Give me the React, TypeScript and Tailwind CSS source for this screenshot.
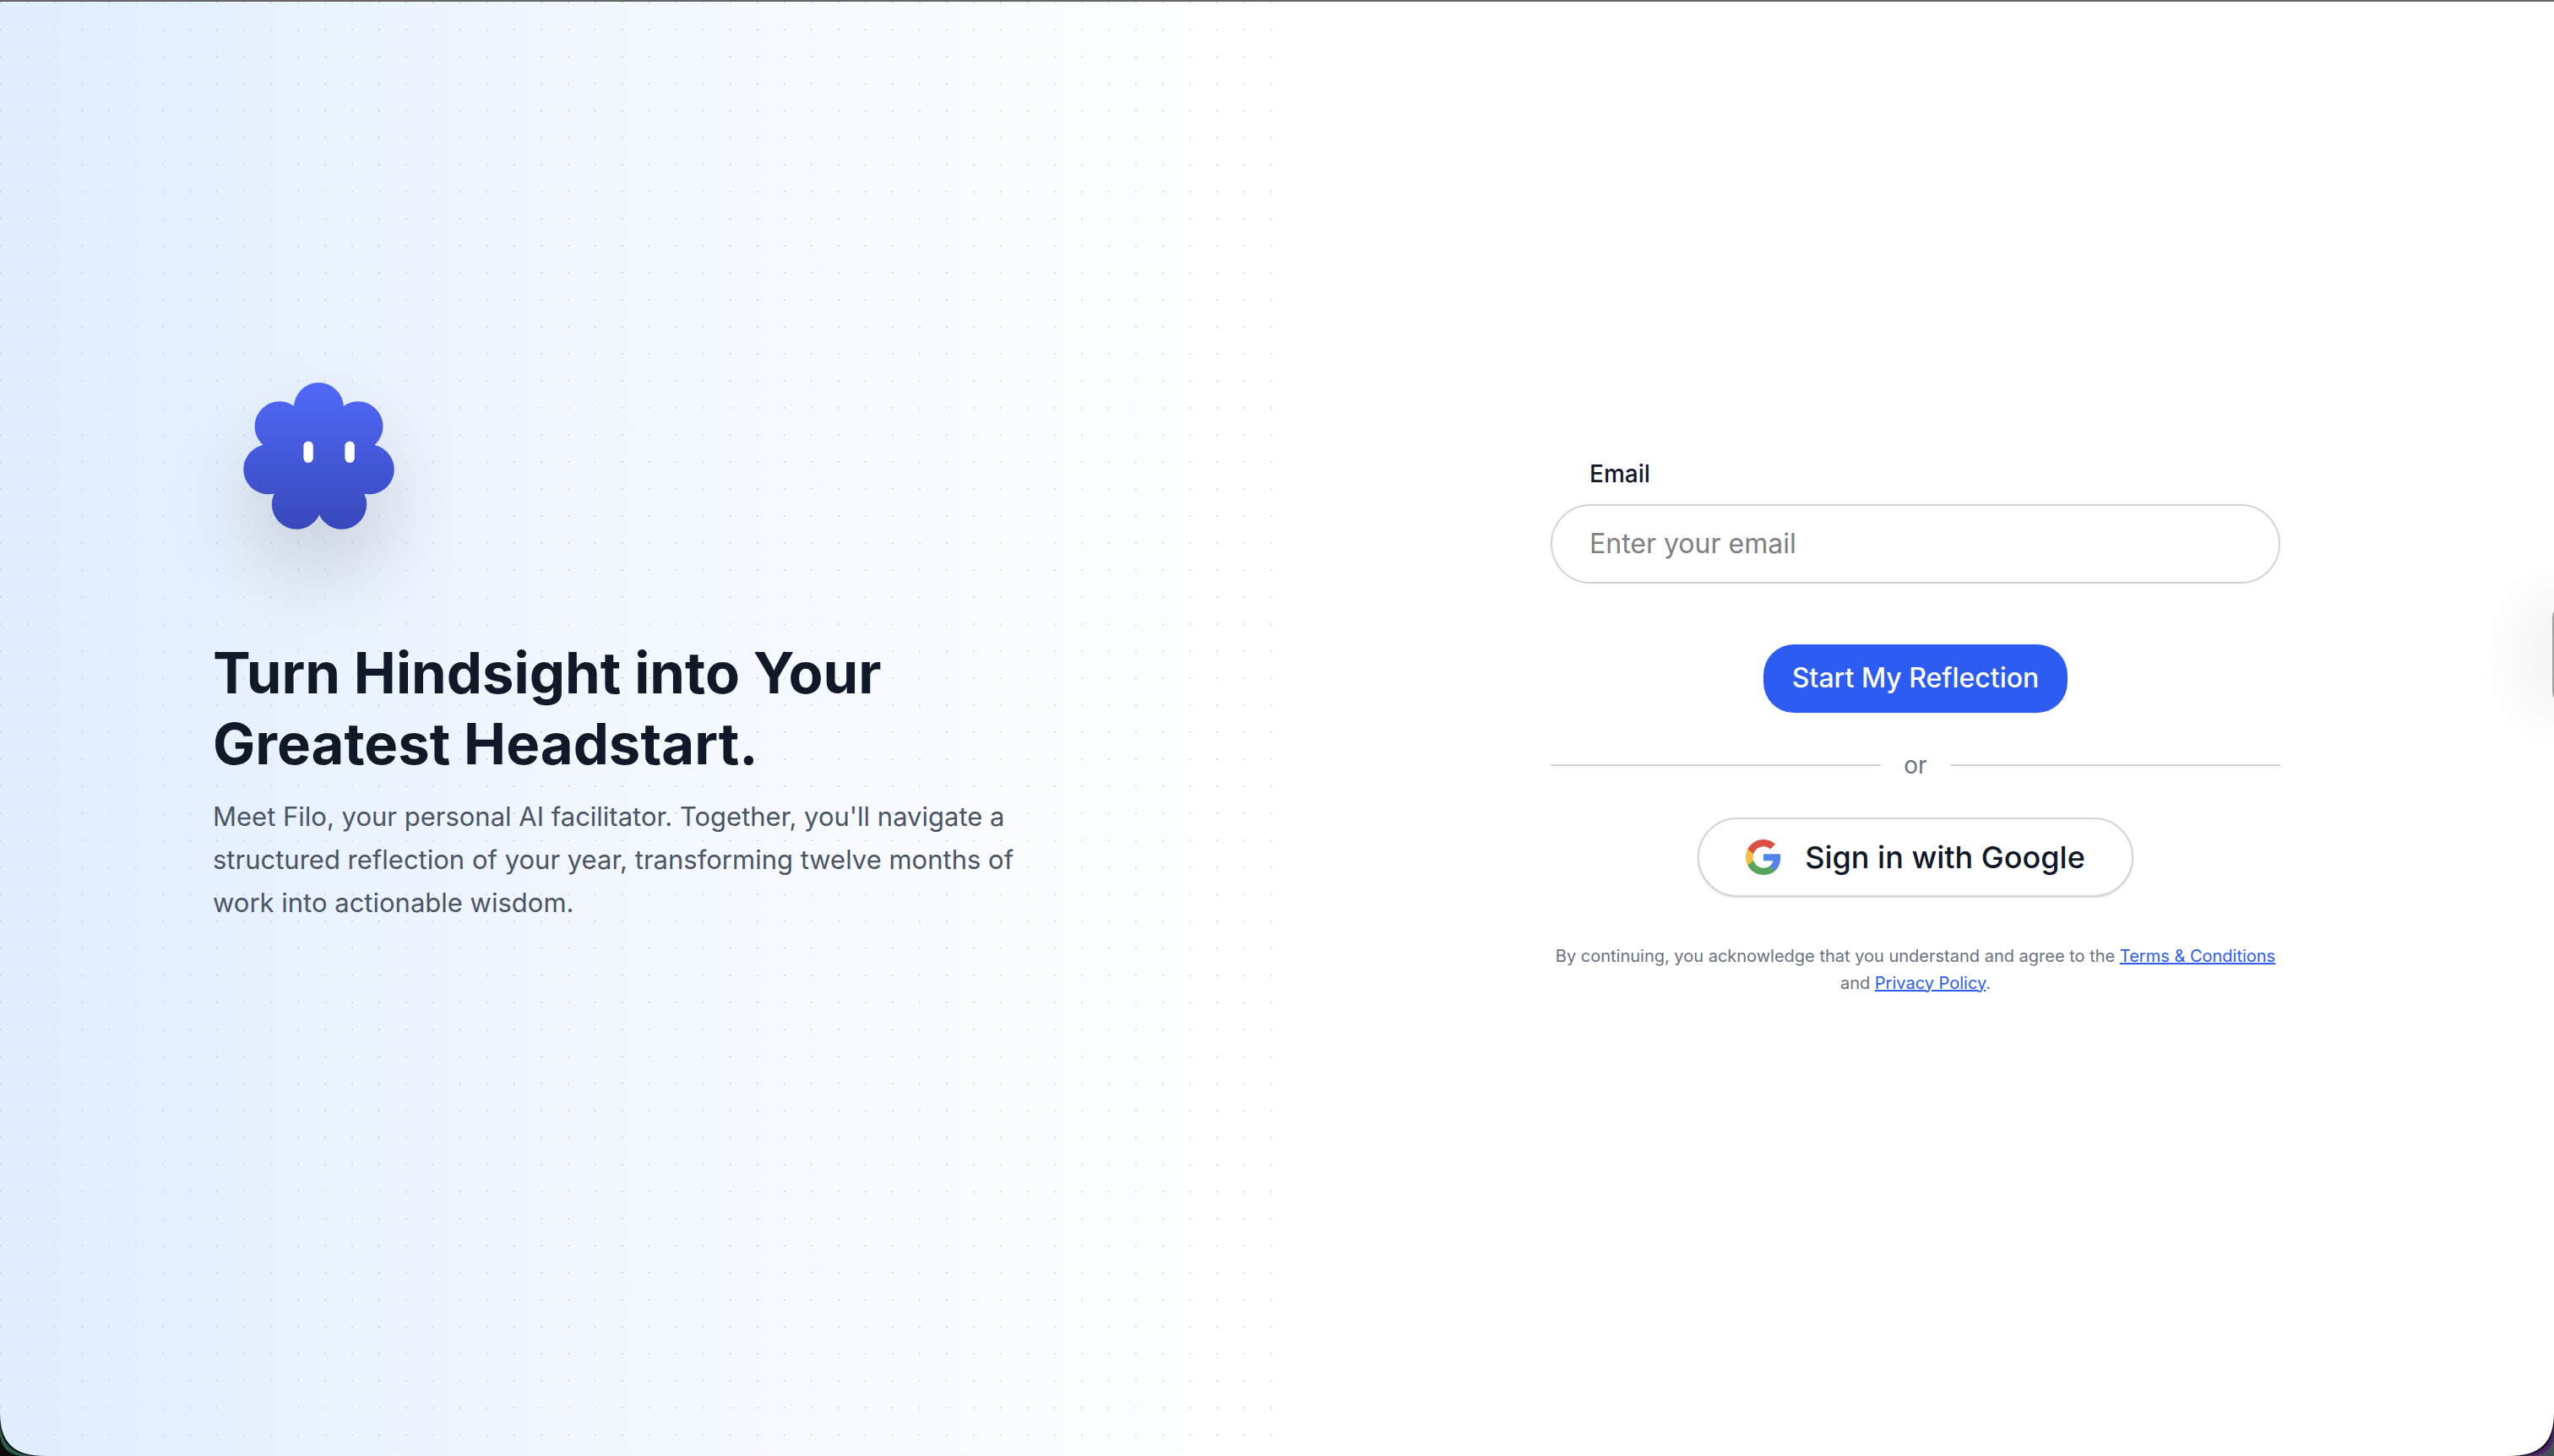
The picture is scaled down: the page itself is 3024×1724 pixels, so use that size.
import { useState } from 'react';

function FiloMascot() {
  return (
    <svg
      viewBox="0 0 250 250"
      className="size-[250px] overflow-visible drop-shadow-[0_50px_50px_rgba(0,0,0,0.15)]"
      role="img"
      aria-label="Filo"
    >
      <defs>
        <linearGradient id="filo-body" gradientUnits="userSpaceOnUse" x1="0" y1="10" x2="0" y2="184">
          <stop offset="0" stopColor="#5069f8" />
          <stop offset="1" stopColor="#3848bb" />
        </linearGradient>
      </defs>
      <g fill="url(#filo-body)">
        <circle cx="125.4" cy="39.5" r="29.5" />
        <circle cx="79" cy="61.8" r="29.5" />
        <circle cx="172" cy="61.8" r="29.5" />
        <circle cx="65.7" cy="112.8" r="29.5" />
        <circle cx="185.3" cy="112.8" r="29.5" />
        <circle cx="99.3" cy="154.2" r="29.5" />
        <circle cx="152.7" cy="154.2" r="29.5" />
        <path d="M125.4 39.5 172 61.8 185.3 112.8 152.7 154.2H99.3L65.7 112.8 79 61.8Z" />
      </g>
      <rect x="107.4" y="79.4" width="11.4" height="25.6" rx="5.7" fill="#fff" />
      <rect x="156.4" y="79.4" width="11.4" height="25.6" rx="5.7" fill="#fff" />
    </svg>
  );
}

function GoogleIcon() {
  return (
    <svg viewBox="1 1 22 22" className="size-[42px] shrink-0" aria-hidden="true">
      <path
        fill="#5383ec"
        d="M22.56 12.25c0-.78-.07-1.53-.2-2.25H12v4.26h5.92c-.26 1.37-1.04 2.53-2.21 3.31v2.77h3.57c2.08-1.92 3.28-4.74 3.28-8.09z"
      />
      <path
        fill="#58a55c"
        d="M12 23c2.97 0 5.46-.98 7.28-2.66l-3.57-2.77c-.98.66-2.23 1.06-3.71 1.06-2.86 0-5.29-1.93-6.16-4.53H2.18v2.84C3.99 20.53 7.7 23 12 23z"
      />
      <path
        fill="#f1bf42"
        d="M5.84 14.09c-.22-.66-.35-1.36-.35-2.09s.13-1.43.35-2.09V7.07H2.18C1.43 8.55 1 10.22 1 12s.43 3.45 1.18 4.93l2.85-2.22.81-.62z"
      />
      <path
        fill="#d95140"
        d="M12 5.38c1.62 0 3.06.56 4.21 1.64l3.15-3.15C17.45 2.09 14.97 1 12 1 7.7 1 3.99 3.47 2.18 7.07l3.66 2.84c.87-2.6 3.3-4.53 6.16-4.53z"
      />
    </svg>
  );
}

// Desktop peeking out behind the rounded window corners
function WindowCorners() {
  return (
    <>
      <svg viewBox="0 0 56 60" className="absolute bottom-0 left-0 h-[60px] w-14" aria-hidden="true">
        <path d="M0 8C0 44 16 60 54 60H0Z" fill="#111714" />
        <path d="M0 22C2 46 14 57 38 60H0Z" fill="#2f5c49" />
        <path d="M0 36C2 50 9 57 24 60H0Z" fill="#0b0b0c" />
      </svg>
      <svg viewBox="0 0 56 60" className="absolute right-0 bottom-0 h-[60px] w-14" aria-hidden="true">
        <path d="M56 8C56 44 40 60 2 60H56Z" fill="#1a1022" />
        <path d="M56 22C54 46 42 57 18 60H56Z" fill="#4a2462" />
        <path d="M56 38C54 50 47 57 32 60H56Z" fill="#454e54" />
      </svg>
    </>
  );
}

export default function App() {
  const [email, setEmail] = useState('');

  return (
    <div className="relative flex min-h-screen flex-col overflow-hidden bg-white font-['Inter',sans-serif] text-[#111827]">
      <div className="h-[2px] bg-[#656565]" />

      <main className="grid flex-1 grid-cols-2">
        <section className="flex flex-col justify-center bg-[radial-gradient(circle_at_1px_1px,rgba(190,190,195,0.45)_1px,transparent_0),linear-gradient(to_right,#dfedff,#f2f7ff_45%,#ffffff)] bg-[size:32px_32px,100%_100%] px-[252px] pb-[190px]">
          <FiloMascot />
          <h1 className="mt-[62px] text-[67px] leading-[84px] font-bold">
            Turn Hindsight into Your
            <br />
            Greatest Headstart.
          </h1>
          <p className="mt-[18px] max-w-[1000px] text-[31px] leading-[51px] text-[#4b5563]">
            Meet Filo, your personal AI facilitator. Together, you'll navigate a structured reflection of your year,
            transforming twelve months of work into actionable wisdom.
          </p>
        </section>

        <section className="flex items-center justify-center pb-1">
          <div className="flex w-[864px] flex-col items-center">
            <form className="flex w-full flex-col items-center" onSubmit={(e) => e.preventDefault()}>
              <div className="w-full">
                <label htmlFor="email" className="block pl-[46px] text-[28px] leading-9 font-medium">
                  Email
                </label>
                <input
                  id="email"
                  type="email"
                  value={email}
                  onChange={(e) => setEmail(e.target.value)}
                  placeholder="Enter your email"
                  className="mt-[18px] h-[94px] w-full rounded-full border-2 border-[#d1d5db] px-11 text-[32px] placeholder:text-[#808080]"
                />
              </div>
              <button
                type="submit"
                className="mt-[72px] h-[81px] w-[360px] rounded-[36px] bg-[#2c5cf2] text-[32px] font-medium text-white"
              >
                Start My Reflection
              </button>
            </form>

            <div className="mt-11 flex w-full items-center gap-[27px]">
              <div className="h-[2px] flex-1 bg-[#d1d5db]" />
              <span className="text-[28px] leading-9 text-[#6b7280]">or</span>
              <div className="h-[2px] flex-1 bg-[#d1d5db]" />
            </div>

            <button
              type="button"
              className="mt-11 flex h-[94px] w-[516px] items-center justify-center gap-7 rounded-full border-2 border-[#d1d5db] bg-white text-[36px] font-medium shadow-sm"
            >
              <GoogleIcon />
              Sign in with Google
            </button>

            <p className="mt-[54px] text-center text-[20px] leading-8 text-[#6b7280]">
              By continuing, you acknowledge that you understand and agree to the{' '}
              <a href="#terms" className="text-[#2c5cf2] underline">
                Terms &amp; Conditions
              </a>{' '}
              and{' '}
              <a href="#privacy" className="text-[#2c5cf2] underline">
                Privacy Policy
              </a>
              .
            </p>
          </div>
        </section>
      </main>

      {/* Collapsed side widget, only its edge stays on screen */}
      <div className="absolute top-[41.5%] -right-[30px] h-[120px] w-8 rounded-2xl bg-[#a0a0a0] shadow-[0_0_90px_rgba(0,0,0,0.2)]" />
      <WindowCorners />
    </div>
  );
}
